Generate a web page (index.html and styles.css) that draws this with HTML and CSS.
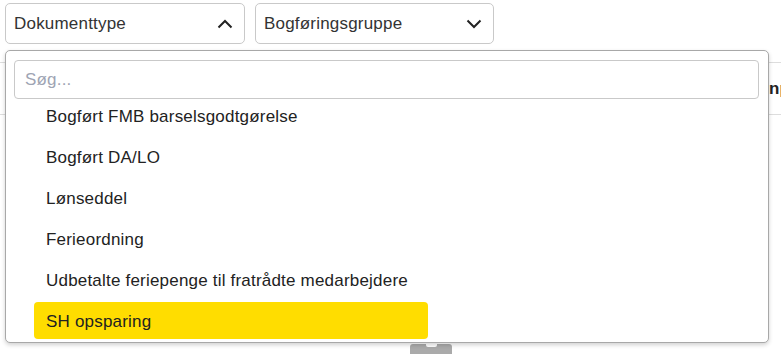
FILE: index.html
```html
<!DOCTYPE html>
<html lang="da">
<head>
<meta charset="utf-8">
<link rel="stylesheet" href="styles.css">
</head>
<body>
<div class="page">
  <div class="filters">
    <div class="select">
      <span class="select-label">Dokumenttype</span>
      <svg class="chev" width="16" height="10" viewBox="0 0 16 10"><polyline points="1.5,8.5 8,2 14.5,8.5" fill="none" stroke="#222" stroke-width="2"/></svg>
    </div>
    <div class="select">
      <span class="select-label">Bogføringsgruppe</span>
      <svg class="chev" width="16" height="10" viewBox="0 0 16 10"><polyline points="1.5,1.5 8,8 14.5,1.5" fill="none" stroke="#222" stroke-width="2"/></svg>
    </div>
  </div>
  <div class="table-head"><span class="th">Input</span></div>
  <div class="table-body"></div>
  <div class="pager"><div class="pager-btn"><span class="notch"></span></div></div>

  <div class="dropdown">
    <div class="search"><span class="placeholder">Søg...</span></div>
    <ul class="options">
      <li class="option">Bogført FMB barselsgodtgørelse</li>
      <li class="option">Bogført DA/LO</li>
      <li class="option">Lønseddel</li>
      <li class="option">Ferieordning</li>
      <li class="option">Udbetalte feriepenge til fratrådte medarbejdere</li>
      <li class="option active">SH opsparing</li>
    </ul>
  </div>
</div>
</body>
</html>
```

FILE: styles.css
```css
* { box-sizing: border-box; }
html, body { margin: 0; padding: 0; background: #fff; }
body {
  font-family: "Liberation Sans", Arial, sans-serif;
  font-size: 17px;
  letter-spacing: 0.2px;
  color: #222;
  width: 781px;
  height: 354px;
  overflow: hidden;
}
.page { position: relative; height: 354px; }
.filters {
  display: flex;
  gap: 10px;
  padding: 3px 0 0 5px;
}
.select {
  width: 240px;
  height: 41px;
  border: 1px solid #c9c9c9;
  border-radius: 5px;
  display: flex;
  align-items: center;
  justify-content: space-between;
  padding: 0 11px 0 8px;
  color: #333;
}
.select + .select { width: 239px; }
.select-label { line-height: 20px; padding-top: 1px; }
.chev { display: block; }

.table-head {
  margin-top: 18px;
  height: 53px;
  border-top: 1px solid #ddd;
  border-bottom: 1px solid #ddd;
  display: flex;
  align-items: center;
  padding-left: 764px;
  white-space: nowrap;
}
.th { font-weight: bold; color: #222; padding-top: 1px; }
.table-body {
  height: 229px;
}
.pager {
  display: flex;
  padding-left: 410px;
}
.pager-btn {
  width: 42px;
  height: 12px;
  background: #aaa;
  border-radius: 3px 3px 0 0;
  display: flex;
  justify-content: center;
}
.notch {
  width: 11px;
  height: 3px;
  background: #fff;
  border-radius: 0 0 2px 2px;
}

.dropdown {
  position: absolute;
  left: 5px;
  top: 50px;
  width: 764px;
  height: 293px;
  background: #fff;
  border: 1px solid #a8a8a8;
  border-radius: 5px;
  box-shadow: 0 2px 4px rgba(0,0,0,0.18);
  padding: 9px 9px 0 8px;
}
.search {
  height: 39px;
  border: 1px solid #c9c9c9;
  border-radius: 4px;
  display: flex;
  align-items: center;
  padding-left: 10px;
}
.placeholder { color: #9ea4b3; padding-top: 1px; }
.options {
  list-style: none;
  margin: -2px 0 0 20px;
  padding: 0;
  display: flex;
  flex-direction: column;
  gap: 4px;
}
.option {
  width: 394px;
  height: 37px;
  display: flex;
  align-items: center;
  padding: 2px 12px 0;
  border-radius: 4px;
  color: #222;
}
.option.active { background: #ffdd00; }
```
